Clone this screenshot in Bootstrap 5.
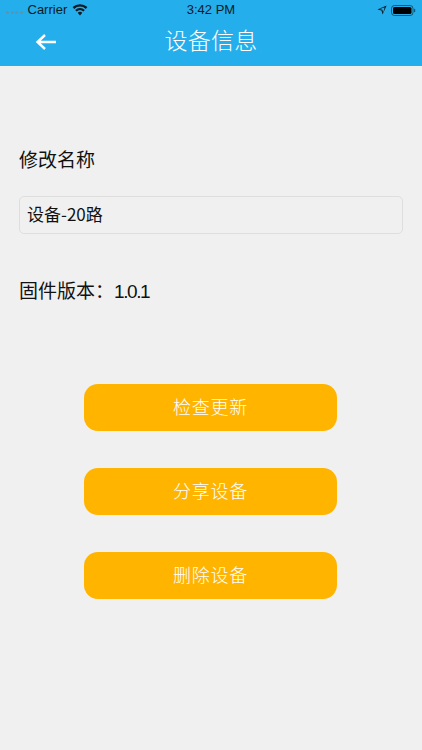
<!DOCTYPE html>
<html lang="zh">
<head>
<meta charset="utf-8">
<meta name="viewport" content="width=device-width, initial-scale=1">
<link href="https://cdn.jsdelivr.net/npm/bootstrap@5.3.0/dist/css/bootstrap.min.css" rel="stylesheet">
<style>
html,body{height:100%}
body{background:#f0f0f0;font-family:"Liberation Sans","Noto Sans CJK SC",sans-serif;color:#111;overflow:hidden}
.app-head{background:#25aeec;height:66px;color:#fff}
.status-row{height:20px;padding:0 6px 0 6px;font-size:13px;color:#0d1a22;position:relative}
.sig-dots{display:flex;gap:1.5px;margin-right:5px;margin-top:4px}
.sig-dots i{width:3px;height:3px;border-radius:50%;background:#5d93ae;display:block}
.clock{position:absolute;left:0;right:0;top:2px;text-align:center;line-height:16px}
.wifi-ico{margin-left:5px}
.title-row{height:46px;position:relative}
.back-btn{position:absolute;left:34px;top:12px;line-height:0}
.page-title{font-size:23px;line-height:39px;text-align:center;width:100%;color:#fff;font-family:"Noto Sans CJK SC",sans-serif;font-weight:300;margin:0;letter-spacing:.3px}
.main-area{padding:0 19px 0 19px}
.lbl{font-size:19px;line-height:26px;font-family:"Noto Sans CJK SC",sans-serif;margin:0}
.lbl-name{margin-top:80px}
.name-input{margin-top:24px;height:38px;background:#f0f0f0;border:1px solid #dedede;border-radius:5px;font-size:17px;padding:0 7px 4px;color:#111;font-family:"Noto Sans CJK SC",sans-serif;width:384px}
.name-input:focus{background:#f0f0f0;box-shadow:none;border-color:#dedede}
.lbl-ver{margin-top:43px}
.ver-num{font-family:"Liberation Sans",sans-serif;letter-spacing:-1.4px}
.act-stack{margin-top:79px;gap:37px;margin-right:1px}
.act-btn{width:253px;height:47px;background:#ffb400;border:0;border-radius:14px;color:#fff;font-size:18px;font-family:"Noto Sans CJK SC",sans-serif;font-weight:300;padding:0 0 2px;letter-spacing:.8px}
.act-btn:hover,.act-btn:active{background:#ffb400!important;color:#fff!important}
</style>
</head>
<body>
<header class="app-head">
  <div class="status-row d-flex align-items-center">
    <span class="sig-dots"><i></i><i></i><i></i><i></i></span>
    <span>Carrier</span>
    <svg class="wifi-ico" width="16" height="12" viewBox="0 0 16 12"><path fill="#0d1a22" d="M8 11.5 5.7 8.8a3.4 3.4 0 0 1 4.6 0zM4.6 7.6 3.2 6a7 7 0 0 1 9.6 0l-1.4 1.6a5 5 0 0 0-6.8 0zM2.2 4.9.6 3.1a10.8 10.8 0 0 1 14.8 0l-1.6 1.8a8.5 8.5 0 0 0-11.6 0z"/></svg>
    <span class="clock">3:42 PM</span>
    <svg class="ms-auto me-1" width="10" height="10" viewBox="0 0 10 10"><path fill="#0d1a22" d="M9.6.4 5.6 9.6 4.5 5.5.4 4.4zM7.6 2.4 2.6 4l2.8.8.8 2.8z"/></svg>
    <svg width="25" height="11" viewBox="0 0 25 11"><rect x=".5" y=".5" width="21.5" height="10" rx="3" fill="none" stroke="#0d1a22" stroke-opacity=".6"/><rect x="2" y="2" width="18.5" height="7" rx="1.6" fill="#000"/><rect x="23" y="3.8" width="1.2" height="3.4" rx=".6" fill="#0d1a22" fill-opacity=".6"/></svg>
  </div>
  <div class="title-row d-flex">
    <span class="back-btn"><svg width="24" height="20" viewBox="0 0 24 20"><path d="M22 10H4M11 3 3.5 10l7.5 7" fill="none" stroke="#fff" stroke-width="2.4"/></svg></span>
    <h1 class="page-title">设备信息</h1>
  </div>
</header>
<main class="main-area">
  <p class="lbl lbl-name">修改名称</p>
  <input class="form-control name-input" type="text" value="设备-20路" aria-label="修改名称">
  <p class="lbl lbl-ver">固件版本：<span class="ver-num">1.0.1</span></p>
  <div class="act-stack d-flex flex-column align-items-center">
    <button class="btn act-btn" type="button">检查更新</button>
    <button class="btn act-btn" type="button">分享设备</button>
    <button class="btn act-btn" type="button">删除设备</button>
  </div>
</main>
<script src="https://cdn.jsdelivr.net/npm/bootstrap@5.3.0/dist/js/bootstrap.bundle.min.js"></script>
</body>
</html>
